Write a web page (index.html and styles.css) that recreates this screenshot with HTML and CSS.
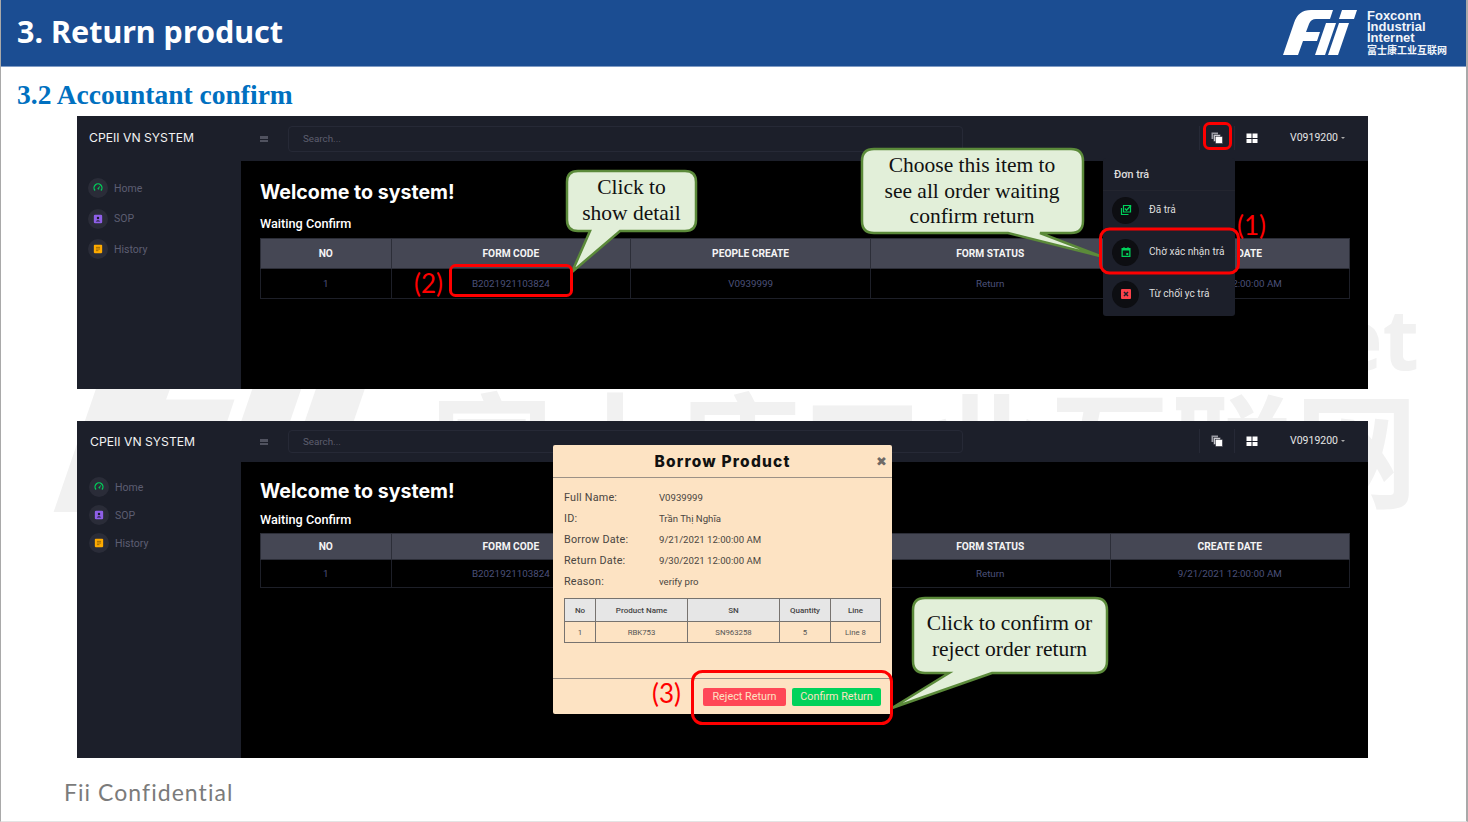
FILE: index.html
```html
<!DOCTYPE html>
<html lang="en">
  <head>
    <meta charset="UTF-8" />
    <title>Return product</title>
    <link rel="stylesheet" href="styles.css">
  </head>
  <body>
    <svg class="sprites" width="0" height="0">
      <symbol id="i-fii" viewBox="0 0 74 45">
        <path d="M0 45 L11 13 Q15 0 28 0 L50 0 L47 9 L33 9 Q28 9 26 14 L23 22 L37 22 L34 31 L20 31 L15 45 Z" />
        <path d="M32 45 L43 13 L53 13 L42 45 Z" />
        <path d="M45 45 L56 13 L66 13 L55 45 Z" />
        <path d="M56 9 L59 0 L74 0 L71 9 Z" />
      </symbol>
      <symbol id="i-gauge" viewBox="0 0 24 24">
        <path d="M5 18a9.5 9.5 0 1 1 14 0" fill="none" stroke="#00d25b" stroke-width="3" />
        <path d="M11 14 L16 8 L13.5 15.5 Z" fill="#00d25b" stroke="#00d25b" />
      </symbol>
      <symbol id="i-contact" viewBox="0 0 24 24">
        <rect x="2" y="2" width="20" height="20" rx="3" fill="#8f5fe8" />
        <circle cx="12" cy="9.5" r="3" fill="#1c1f2b" />
        <path d="M6.5 18 Q12 11.5 17.5 18 Z" fill="#1c1f2b" />
      </symbol>
      <symbol id="i-book" viewBox="0 0 24 24">
        <rect x="2" y="2" width="20" height="20" rx="2" fill="#ffab00" />
        <path d="M7 8 H17 M7 12 H17 M7 16 H13" stroke="#8a5c00" stroke-width="2" />
      </symbol>
      <symbol id="i-copy" viewBox="0 0 24 24">
        <rect x="1" y="1" width="13" height="13" fill="#9a9ba3" />
        <rect x="5" y="5" width="14" height="14" fill="#c9c9ce" stroke="#1c1f2b" />
        <rect x="9" y="9" width="14" height="14" fill="#fff" stroke="#1c1f2b" />
      </symbol>
      <symbol id="i-grid" viewBox="0 0 24 24">
        <path d="M1 3h10v9H1z M13 3h10v9H13z M1 14h10v8H1z M13 14h10v8H13z" fill="#fff" />
      </symbol>
      <symbol id="i-stack" viewBox="0 0 24 24">
        <path d="M7 3 H21 V16 H7 Z" fill="none" stroke="#00d25b" stroke-width="2.4" />
        <path d="M3 8 V21 H17" fill="none" stroke="#00d25b" stroke-width="2.4" />
        <path d="M10 9 L13 12.5 L22 3" fill="none" stroke="#00d25b" stroke-width="2.6" />
      </symbol>
      <symbol id="i-calendar" viewBox="0 0 24 24">
        <path d="M3 4 H7 V2 H9 V4 H15 V2 H17 V4 H21 V22 H3 Z" fill="#00d25b" />
        <rect x="5.5" y="9" width="13" height="10.500" fill="#0d1512" />
        <rect x="12.500" y="14" width="4" height="4" fill="#00d25b" />
      </symbol>
      <symbol id="i-reject" viewBox="0 0 24 24">
        <rect x="2" y="2" width="20" height="20" rx="2" fill="#fc424a" />
        <path d="M8 8 L16 16 M16 8 L8 16" stroke="#1c1f2b" stroke-width="3" />
      </symbol>
    </svg>

    <div class="slide">
      <!-- watermark sits behind the screenshots -->
      <div class="mark-et">et</div>
      <svg class="mark-logo"><use href="#i-fii" /></svg>
      <div class="mark-cn">富士康工业互联网</div>

      <header class="slide-head">
        <h1>3. Return product</h1>
        <div class="brand">
          <svg class="brand-logo"><use href="#i-fii" /></svg>
          <div class="brand-text">
            <span>Foxconn</span>
            <span>Industrial</span>
            <span>Internet</span>
            <span class="brand-cn">富士康工业互联网</span>
          </div>
        </div>
      </header>

      <h2 class="slide-sub">3.2 Accountant confirm</h2>

      <div class="shots">
        <section class="shot shot-a">
          <aside class="side">
            <div class="side-brand">CPEII VN SYSTEM</div>
            <nav class="side-nav">
              <a><span class="dot"><svg><use href="#i-gauge" /></svg></span>Home</a>
              <a><span class="dot"><svg><use href="#i-contact" /></svg></span>SOP</a>
              <a><span class="dot"><svg><use href="#i-book" /></svg></span>History</a>
            </nav>
          </aside>
          <div class="app">
            <div class="bar">
              <span class="burger"></span>
              <div class="search">Search...</div>
              <div class="bar-right">
                <span class="bar-btn"><svg><use href="#i-copy" /></svg></span>
                <span class="bar-btn no-line"><svg><use href="#i-grid" /></svg></span>
                <span class="user">V0919200<i class="caret"></i></span>
              </div>
            </div>
            <div class="content">
              <h3>Welcome to system!</h3>
              <h4>Waiting Confirm</h4>
              <table class="grid">
                <colgroup><col class="c1"><col class="c2"><col class="c3"><col class="c4"><col></colgroup>
                <thead><tr><th>NO</th><th>FORM CODE</th><th>PEOPLE CREATE</th><th>FORM STATUS</th><th>CREATE DATE</th></tr></thead>
                <tbody><tr><td>1</td><td>B2021921103824</td><td>V0939999</td><td>Return</td><td>9/21/2021 12:00:00 AM</td></tr></tbody>
              </table>
            </div>
          </div>
        </section>

        <section class="shot shot-b">
          <aside class="side">
            <div class="side-brand">CPEII VN SYSTEM</div>
            <nav class="side-nav">
              <a><span class="dot"><svg><use href="#i-gauge" /></svg></span>Home</a>
              <a><span class="dot"><svg><use href="#i-contact" /></svg></span>SOP</a>
              <a><span class="dot"><svg><use href="#i-book" /></svg></span>History</a>
            </nav>
          </aside>
          <div class="app">
            <div class="bar">
              <span class="burger"></span>
              <div class="search">Search...</div>
              <div class="bar-right">
                <span class="bar-btn"><svg><use href="#i-copy" /></svg></span>
                <span class="bar-btn no-line"><svg><use href="#i-grid" /></svg></span>
                <span class="user">V0919200<i class="caret"></i></span>
              </div>
            </div>
            <div class="content">
              <h3>Welcome to system!</h3>
              <h4>Waiting Confirm</h4>
              <table class="grid">
                <colgroup><col class="c1"><col class="c2"><col class="c3"><col class="c4"><col></colgroup>
                <thead><tr><th>NO</th><th>FORM CODE</th><th>PEOPLE CREATE</th><th>FORM STATUS</th><th>CREATE DATE</th></tr></thead>
                <tbody><tr><td>1</td><td>B2021921103824</td><td>V0939999</td><td>Return</td><td>9/21/2021 12:00:00 AM</td></tr></tbody>
              </table>
            </div>
          </div>
        </section>
      </div>

      <footer class="slide-foot">Fii Confidential</footer>

      <!-- dropdown over first screenshot -->
      <div class="drop">
        <div class="drop-head">Đơn trả</div>
        <div class="drop-item"><span class="drop-dot"><svg><use href="#i-stack" /></svg></span><span class="drop-label">Đã trả</span></div>
        <div class="drop-item"><span class="drop-dot"><svg><use href="#i-calendar" /></svg></span><span class="drop-label">Chờ xác nhận trả</span></div>
        <div class="drop-item"><span class="drop-dot"><svg><use href="#i-reject" /></svg></span><span class="drop-label">Từ chối yc trả</span></div>
      </div>

      <!-- modal over second screenshot -->
      <div class="modal">
        <div class="modal-head">
          <span class="modal-title">Borrow Product</span>
          <span class="modal-close">✖</span>
        </div>
        <div class="modal-body">
          <dl class="info">
            <dt>Full Name:</dt><dd>V0939999</dd>
            <dt>ID:</dt><dd>Trần Thị Nghĩa</dd>
            <dt>Borrow Date:</dt><dd>9/21/2021 12:00:00 AM</dd>
            <dt>Return Date:</dt><dd>9/30/2021 12:00:00 AM</dd>
            <dt>Reason:</dt><dd>verify pro</dd>
          </dl>
          <table class="items">
            <colgroup><col class="i1"><col class="i2"><col class="i3"><col class="i4"><col></colgroup>
            <thead><tr><th>No</th><th>Product Name</th><th>SN</th><th>Quantity</th><th>Line</th></tr></thead>
            <tbody><tr><td>1</td><td>RBK753</td><td>SN963258</td><td>5</td><td>Line 8</td></tr></tbody>
          </table>
        </div>
        <div class="modal-foot">
          <button class="btn btn-reject">Reject Return</button>
          <button class="btn btn-confirm">Confirm Return</button>
        </div>
      </div>

      <!-- callouts and red markers drawn over everything -->
      <svg class="marks" width="1468" height="822">
        <path class="bubble" d="M578 171 H685 Q696 171 696 182 V220 Q696 231 685 231 H620 L572 272 L590 231 H578 Q567 231 567 220 V182 Q567 171 578 171 Z" />
        <path class="bubble" d="M874 149 H1071 Q1083 149 1083 161 V221 Q1083 233 1071 233 H1040 L1100 256 L1008 233 H874 Q862 233 862 221 V161 Q862 149 874 149 Z" />
        <path class="bubble" d="M925 598 H1095 Q1107 598 1107 610 V661 Q1107 673 1095 673 H992 L892 708 L949 673 H925 Q913 673 913 661 V610 Q913 598 925 598 Z" />
        <rect class="hit" x="1204.500" y="123.500" width="26" height="25" rx="5" />
        <rect class="hit" x="1100.500" y="229" width="138" height="44" rx="9" />
        <rect class="hit" x="450.500" y="265.500" width="121" height="30" rx="5" />
        <rect class="hit" x="692.500" y="671.500" width="199" height="52" rx="10" />
      </svg>

      <div class="say say-a">Click to<br>show detail</div>
      <div class="say say-b">Choose this item to<br>see all order waiting<br>confirm return</div>
      <div class="say say-c">Click to confirm or<br>reject order return</div>

      <span class="step step-1">(1)</span>
      <span class="step step-2">(2)</span>
      <span class="step step-3">(3)</span>

      <div class="edge"></div>
    </div>
  </body>
</html>
```

FILE: styles.css
```css
* {
  box-sizing: border-box;
}

body {
  margin: 0;
  background: #fff;
  font-family: Roboto, sans-serif;
}

.sprites {
  position: absolute;
}

.slide {
  position: relative;
  width: 1468px;
  height: 822px;
  overflow: hidden;
  background: #fff;
}

.edge {
  position: absolute;
  inset: 0;
  border-left: 1px solid #a9a9a9;
  border-right: 2px solid #a9a9a9;
  border-bottom: 1px solid #e4e4e4;
  pointer-events: none;
}

/* watermark */
.mark-et {
  position: absolute;
  right: 49px;
  top: 283px;
  font-family: "Open Sans", sans-serif;
  font-size: 84px;
  font-weight: 700;
  line-height: 110px;
  color: #f1f1f1;
}

.mark-logo {
  position: absolute;
  left: 53px;
  top: 292px;
  width: 363px;
  height: 220px;
  fill: #f1f1f1;
}

.mark-cn {
  position: absolute;
  left: 430px;
  top: 383px;
  font-family: "Noto Sans CJK SC", sans-serif;
  font-size: 123.500px;
  font-weight: 700;
  line-height: 124px;
  white-space: nowrap;
  color: #f1f1f1;
}

/* slide header */
.slide-head {
  position: relative;
  display: flex;
  justify-content: space-between;
  align-items: center;
  height: 67px;
  padding: 0 21px 0 17px;
  background: #1b4d92;
  border-bottom: 1px solid #7f9bc4;
}

.slide-head h1 {
  margin: -4px 0 0;
  font-family: "Noto Sans", sans-serif;
  font-size: 30.500px;
  font-weight: 700;
  color: #fff;
}

.brand {
  display: flex;
  align-items: center;
  gap: 10px;
}

.brand-logo {
  width: 74px;
  height: 45px;
  fill: #fff;
}

.brand-text {
  display: flex;
  flex-direction: column;
  width: 80px;
  font-family: "Liberation Sans", sans-serif;
  font-size: 13px;
  font-weight: 700;
  line-height: 11.300px;
  color: #f2f5fa;
}

.brand-cn {
  font-family: "Noto Sans CJK SC", sans-serif;
  font-size: 10px;
  font-weight: 700;
  line-height: 13px;
  white-space: nowrap;
}

.slide-sub {
  position: relative;
  height: 49px;
  margin: 0;
  padding: 10px 0 0 17px;
  font-family: "Liberation Serif", serif;
  font-size: 27.500px;
  line-height: 36px;
  font-weight: 700;
  color: #0070c0;
}

/* app screenshots */
.shots {
  position: relative;
  display: flex;
  flex-direction: column;
  gap: 32px;
  margin-left: 77px;
  width: 1291px;
}

.shot {
  display: grid;
  grid-template-columns: 164px 1fr;
  background: #000;
}

.shot-a {
  height: 273px;
}

.shot-b {
  height: 337px;
}

.side {
  background: #1c1f2a;
}

.side-brand {
  display: flex;
  align-items: center;
  padding-left: 12px;
  font-family: Inter, sans-serif;
  font-size: 12.200px;
  color: #f2f2f2;
}

.shot-a .side-brand {
  height: 43px;
  margin-bottom: 2px;
}

.shot-b .side-brand {
  height: 41px;
  padding-left: 13px;
}

.side-nav {
  display: flex;
  flex-direction: column;
  padding-left: 11px;
}

.shot-a .side-nav {
  padding-top: 12px;
}

.shot-b .side-nav {
  padding-top: 11px;
  padding-left: 12px;
}

.side-nav a {
  display: flex;
  align-items: center;
  gap: 6px;
  font-size: 10.500px;
  color: #5c5e72;
}

.shot-a .side-nav a {
  height: 30.500px;
}

.shot-b .side-nav a {
  height: 28px;
}

.dot {
  display: flex;
  align-items: center;
  justify-content: center;
  width: 20px;
  height: 20px;
  border-radius: 50%;
  background: #2a2c38;
}

.dot svg {
  width: 10px;
  height: 10px;
}

.app {
  display: flex;
  flex-direction: column;
  min-width: 0;
}

.bar {
  display: flex;
  align-items: center;
  padding-left: 19px;
  background: #1c1f2a;
}

.shot-a .bar {
  height: 45px;
}

.shot-b .bar {
  height: 41px;
}

.burger {
  width: 8px;
  height: 6px;
  border-top: 2px solid #50525f;
  border-bottom: 2px solid #50525f;
  background: linear-gradient(#50525f, #50525f) center / 100% 1px no-repeat;
}

.search {
  display: flex;
  align-items: center;
  width: 675px;
  margin-left: 20px;
  padding-left: 14px;
  border: 1px solid #262936;
  border-radius: 4px;
  font-size: 9.800px;
  color: #5c5e6e;
}

.shot-a .search {
  height: 26px;
}

.shot-b .search {
  height: 23px;
}

.bar-right {
  display: flex;
  align-items: center;
  margin-left: auto;
  margin-top: -2px;
  padding-right: 23px;
}

.bar-btn {
  display: flex;
  align-items: center;
  justify-content: center;
  width: 35px;
  height: 24px;
  border-left: 1px solid #262936;
}

.bar-btn svg {
  width: 12px;
  height: 12px;
}

.no-line {
  margin-right: 21px;
}

.user {
  display: flex;
  align-items: center;
  gap: 3px;
  font-size: 10.500px;
  color: #e6e6e6;
}

.caret {
  margin-top: 1px;
  border-top: 2.500px solid #aaa;
  border-left: 2.500px solid transparent;
  border-right: 2.500px solid transparent;
}

.content {
  padding-left: 19px;
  padding-right: 18px;
}

.shot-a .content {
  padding-top: 19px;
}

.shot-b .content {
  padding-top: 17px;
}

.content h3 {
  margin: 0;
  font-family: Inter, sans-serif;
  font-size: 19.600px;
  line-height: 24px;
  font-weight: 700;
  color: #fff;
}

.content h4 {
  margin: 0;
  font-family: Roboto, sans-serif;
  font-size: 12.700px;
  line-height: 16px;
  font-weight: 500;
  color: #fff;
}

.shot-a .content h4 {
  margin-top: 12px;
}

.shot-b .content h4 {
  margin-top: 9px;
}

.grid {
  width: 1090px;
  border-collapse: collapse;
  table-layout: fixed;
}

.shot-a .grid {
  margin-top: 6px;
}

.shot-b .grid {
  margin-top: 5px;
}

.grid .c1 {
  width: 130.500px;
}

.grid .c2,
.grid .c3,
.grid .c4 {
  width: 239.700px;
}

.grid th {
  padding: 0;
  background: #454754;
  border: 1px solid #2c2e38;
  font-size: 10.200px;
  font-weight: 700;
  color: #f4f4f4;
}

.grid td {
  padding: 0;
  border: 1px solid #1d1f28;
  text-align: center;
  font-size: 9.800px;
  color: #4b5079;
}

.shot-a .grid th {
  height: 30px;
}

.shot-a .grid td {
  height: 30px;
}

.shot-b .grid th {
  height: 26px;
}

.shot-b .grid td {
  height: 28px;
}

/* dropdown */
.drop {
  position: absolute;
  left: 1103px;
  top: 158px;
  width: 132px;
  height: 158px;
  background: #1c1f2a;
  border-radius: 3px;
}

.drop-head {
  display: flex;
  align-items: center;
  height: 33px;
  margin-bottom: -2px;
  padding-left: 11px;
  border-bottom: 1px solid #23252f;
  font-size: 10.800px;
  font-weight: 500;
  color: #dcdcdc;
}

.drop-item {
  display: flex;
  align-items: center;
  gap: 10px;
  height: 42px;
  padding-left: 9px;
  font-size: 10.100px;
  color: #dedede;
}

.drop-label {
  margin-top: -1px;
}

.drop-dot {
  display: flex;
  align-items: center;
  justify-content: center;
  width: 27px;
  height: 27px;
  border-radius: 50%;
  background: #0d0e12;
}

.drop-dot svg {
  width: 12px;
  height: 12px;
}

/* modal */
.modal {
  position: absolute;
  left: 553px;
  top: 445px;
  display: flex;
  flex-direction: column;
  width: 339px;
  height: 269px;
  background: #fde3c3;
  border-radius: 2px;
}

.modal-head {
  position: relative;
  display: flex;
  justify-content: center;
  align-items: center;
  height: 33px;
  border-bottom: 1px solid #9c9186;
}

.modal-title {
  font-family: Inter, sans-serif;
  font-size: 15.500px;
  font-weight: 800;
  letter-spacing: 1.200px;
  color: #111;
}

.modal-close {
  position: absolute;
  right: 5px;
  top: 8px;
  font-family: "DejaVu Sans", sans-serif;
  font-size: 13px;
  line-height: 17px;
  color: #6f6a66;
}

.modal-body {
  flex: 1;
  padding: 9px 11px 0;
}

.info {
  display: grid;
  grid-template-columns: 95px 1fr;
  grid-auto-rows: 21px;
  align-items: center;
  margin: 0;
  font-size: 10.800px;
  letter-spacing: 0.200px;
  color: #4a4641;
}

.info dd {
  margin: 0;
  font-size: 9.600px;
  letter-spacing: 0;
}

.items {
  width: 317px;
  margin-top: 6px;
  border-collapse: collapse;
  table-layout: fixed;
}

.items .i1 {
  width: 31px;
}

.items .i2,
.items .i3 {
  width: 92px;
}

.items .i4 {
  width: 51px;
}

.items th {
  height: 23px;
  padding: 0;
  background: #e6e6e6;
  border: 1px solid #77736f;
  font-size: 8px;
  font-weight: 500;
  color: #444;
}

.items td {
  height: 21px;
  padding: 0;
  border: 1px solid #77736f;
  text-align: center;
  font-size: 7.800px;
  color: #555;
}

.modal-foot {
  display: flex;
  justify-content: flex-end;
  align-items: center;
  gap: 6px;
  height: 36px;
  padding: 0 11px 0 0;
  border-top: 1px solid #9c9186;
}

.btn {
  height: 18px;
  padding: 0;
  border: none;
  border-radius: 2px;
  font-family: Roboto, sans-serif;
  font-size: 10.800px;
  color: #fde3c3;
}

.btn-reject {
  width: 83px;
  background: #ff4757;
}

.btn-confirm {
  width: 89px;
  background: #00d25b;
}

/* callouts */
.marks {
  position: absolute;
  left: 0;
  top: 0;
  pointer-events: none;
}

.bubble {
  fill: #e2efd9;
  stroke: #5b8a3a;
  stroke-width: 2.500;
}

.hit {
  fill: none;
  stroke: #f00;
  stroke-width: 3;
}

.say {
  position: absolute;
  text-align: center;
  font-family: "Liberation Serif", serif;
  font-size: 21.500px;
  line-height: 25.500px;
  white-space: nowrap;
  color: #111;
}

.say-a {
  left: 566px;
  top: 175px;
  width: 131px;
}

.say-b {
  left: 861px;
  top: 153px;
  width: 222px;
}

.say-c {
  left: 912px;
  top: 611px;
  width: 195px;
}

.step {
  position: absolute;
  font-family: Lato, sans-serif;
  font-size: 26px;
  line-height: 30px;
  color: #f00;
}

.step-1 {
  left: 1237px;
  top: 210px;
}

.step-2 {
  left: 414px;
  top: 268px;
}

.step-3 {
  left: 652px;
  top: 678px;
}

.slide-foot {
  position: absolute;
  left: 64px;
  top: 777px;
  font-family: Lato, sans-serif;
  font-size: 23px;
  line-height: 30px;
  letter-spacing: 1.050px;
  color: #7b7b7b;
}
```
